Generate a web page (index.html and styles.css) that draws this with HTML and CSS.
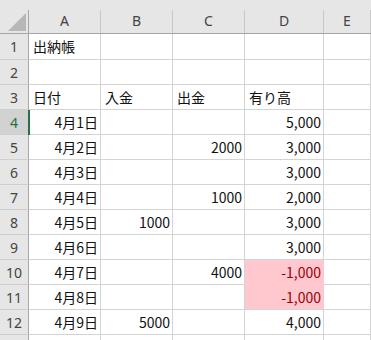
FILE: index.html
```html
<!DOCTYPE html>
<html lang="ja">
<head>
<meta charset="utf-8">
<link rel="stylesheet" href="styles.css">
</head>
<body>
<div class="sheet">
  <div class="row head">
    <div class="corner"><span class="tri"></span></div>
    <div class="ch">A</div>
    <div class="ch">B</div>
    <div class="ch">C</div>
    <div class="ch">D</div>
    <div class="ch">E</div>
  </div>
  <div class="row r1">
    <div class="rh">1</div>
    <div class="c">出納帳</div><div class="c"></div><div class="c"></div><div class="c"></div><div class="c"></div>
  </div>
  <div class="row">
    <div class="rh">2</div>
    <div class="c"></div><div class="c"></div><div class="c"></div><div class="c"></div><div class="c"></div>
  </div>
  <div class="row">
    <div class="rh">3</div>
    <div class="c">日付</div><div class="c">入金</div><div class="c">出金</div><div class="c">有り高</div><div class="c"></div>
  </div>
  <div class="row">
    <div class="rh sel">4</div>
    <div class="c n">4月1日</div><div class="c"></div><div class="c"></div><div class="c n">5,000</div><div class="c"></div>
  </div>
  <div class="row">
    <div class="rh">5</div>
    <div class="c n">4月2日</div><div class="c"></div><div class="c n">2000</div><div class="c n">3,000</div><div class="c"></div>
  </div>
  <div class="row">
    <div class="rh">6</div>
    <div class="c n">4月3日</div><div class="c"></div><div class="c"></div><div class="c n">3,000</div><div class="c"></div>
  </div>
  <div class="row">
    <div class="rh">7</div>
    <div class="c n">4月4日</div><div class="c"></div><div class="c n">1000</div><div class="c n">2,000</div><div class="c"></div>
  </div>
  <div class="row">
    <div class="rh">8</div>
    <div class="c n">4月5日</div><div class="c n">1000</div><div class="c"></div><div class="c n">3,000</div><div class="c"></div>
  </div>
  <div class="row">
    <div class="rh">9</div>
    <div class="c n">4月6日</div><div class="c"></div><div class="c"></div><div class="c n">3,000</div><div class="c"></div>
  </div>
  <div class="row">
    <div class="rh">10</div>
    <div class="c n">4月7日</div><div class="c"></div><div class="c n">4000</div><div class="c n bad bad-top">-1,000</div><div class="c"></div>
  </div>
  <div class="row">
    <div class="rh">11</div>
    <div class="c n">4月8日</div><div class="c"></div><div class="c"></div><div class="c n bad">-1,000</div><div class="c"></div>
  </div>
  <div class="row">
    <div class="rh">12</div>
    <div class="c n">4月9日</div><div class="c n">5000</div><div class="c"></div><div class="c n">4,000</div><div class="c"></div>
  </div>
  <div class="row">
    <div class="rh"></div>
    <div class="c"></div><div class="c"></div><div class="c"></div><div class="c"></div><div class="c"></div>
  </div>
</div>
</body>
</html>
```
FILE: styles.css
```css
html, body {
  margin: 0;
  padding: 0;
  background: #ffffff;
  overflow: hidden;
}
.sheet {
  width: 371px;
  height: 340px;
  overflow: hidden;
  font-family: "Noto Sans CJK JP", "Noto Sans", sans-serif;
}
.row {
  display: grid;
  grid-template-columns: 29px 72px 72px 72px 79px 1fr;
  height: 25px;
}
.row.r1 {
  height: 26px;
}
.row.head {
  height: 34px;
  background: #e6e6e6;
  padding-top: 10px;
  box-sizing: border-box;
  border-bottom: 1px solid #a6a6a6;
}
.corner {
  position: relative;
  border-right: 1px solid #a6a6a6;
}
.tri {
  position: absolute;
  left: 8px;
  top: 3px;
  width: 0;
  height: 0;
  border-left: 18px solid transparent;
  border-bottom: 18px solid #b7b7b7;
}
.ch {
  display: flex;
  align-items: center;
  justify-content: center;
  border-right: 1px solid #c8c8c8;
  font-family: "Noto Sans", "Liberation Sans", sans-serif;
  font-size: 14px;
  color: #444444;
  padding-bottom: 2px;
  box-sizing: border-box;
}
.rh {
  position: relative;
  display: flex;
  align-items: center;
  justify-content: center;
  background: #e6e6e6;
  border-right: 1px solid #a6a6a6;
  border-bottom: 1px solid #cfcfcf;
  font-family: "Noto Sans", "Liberation Sans", sans-serif;
  font-size: 14px;
  color: #444444;
  box-sizing: border-box;
}
.rh.sel {
  background: #d2d2d2;
  color: #217346;
}
.rh.sel::after {
  content: "";
  position: absolute;
  right: -2px;
  top: 0;
  bottom: -1px;
  width: 2px;
  background: #217346;
}
.c {
  display: flex;
  align-items: center;
  padding: 0 3px 1px 4px;
  border-right: 1px solid #d4d4d4;
  border-bottom: 1px solid #d4d4d4;
  box-sizing: border-box;
  font-size: 14px;
  color: #111111;
  white-space: nowrap;
}
.c.n {
  justify-content: flex-end;
  padding-right: 2px;
}
.c.bad {
  background: #ffc7ce;
  color: #9c0006;
  border-right-color: #ffc7ce;
}
.c.bad-top {
  border-bottom-color: #ffc7ce;
}
```
